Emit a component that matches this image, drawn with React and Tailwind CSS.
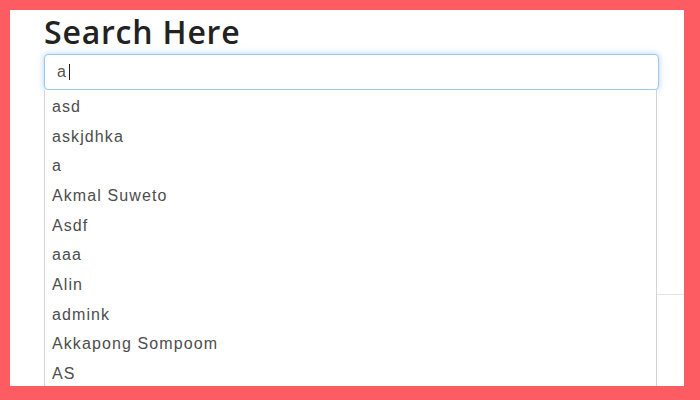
export default function App() {
  const items = [
    'asd',
    'askjdhka',
    'a',
    'Akmal Suweto',
    'Asdf',
    'aaa',
    'Alin',
    'admink',
    'Akkapong Sompoom',
    'AS',
  ];

  return (
    <div className="w-[700px] h-[400px] bg-[#fd5c63] pt-[10px] pl-[10px] pr-[16px] pb-[14px]">
      <div className="relative h-full bg-white overflow-hidden">
        {/* page content behind the dropdown */}
        <div className="ml-[630px] h-[285px] border-b border-[#e5e5e5]" />

        <div className="absolute inset-0 pl-[34px] pr-[25px]">
          <h1
            className="text-[32px] leading-[44px] tracking-[0.8px] font-semibold text-[#222]"
            style={{ fontFamily: '"Open Sans", "Noto Sans", sans-serif' }}
          >
            Search Here
          </h1>
          <div className="h-[36px] flex items-center px-[12px] border border-[#9cc8ee] rounded-[4px] shadow-[0_0_6px_rgba(102,175,233,0.55)] bg-white">
            <span
              className="text-[16px] text-[#555]"
              style={{ fontFamily: '"Liberation Sans", Arial, sans-serif' }}
            >
              a
            </span>
            <span className="ml-[3px] w-px h-[16px] bg-[#222]" />
          </div>
          <ul
            className="w-[613px] h-[400px] border-x border-[#d4d4d4] bg-white pt-[2px]"
            style={{ fontFamily: '"Liberation Sans", Arial, sans-serif' }}
          >
            {items.map((item, i) => (
              <li
                key={i}
                className="h-[29.7px] flex items-center px-[7px] text-[16px] tracking-[1.1px] text-[#4d4d4d]"
              >
                {item}
              </li>
            ))}
          </ul>
        </div>
      </div>
    </div>
  );
}
